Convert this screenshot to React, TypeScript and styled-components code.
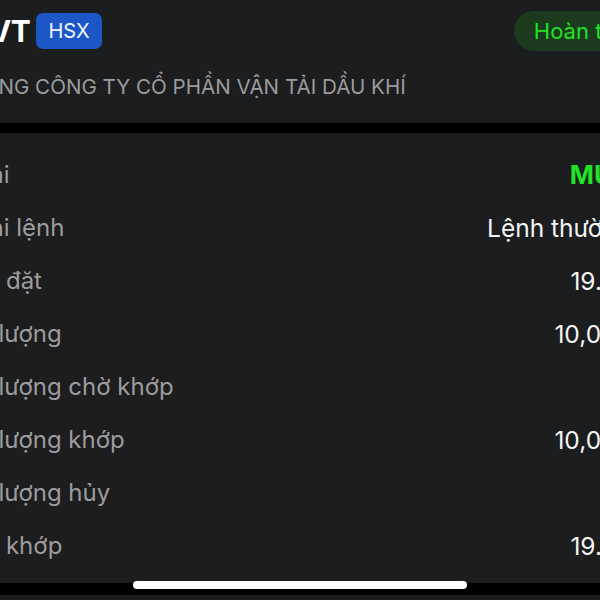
import styled, { createGlobalStyle } from "styled-components";

const GlobalStyle = createGlobalStyle`
  html, body {
    margin: 0;
    padding: 0;
    background: #000;
  }
  * {
    box-sizing: border-box;
  }
`;

const Screen = styled.div`
  position: relative;
  width: 600px;
  height: 600px;
  overflow: hidden;
  background: #000;
  font-family: "Inter", "Noto Sans", sans-serif;
`;

// the screenshot is a crop of a wider phone screen, so the content runs past both edges
const Viewport = styled.div`
  width: 670px;
  margin-left: -38px;
  display: flex;
  flex-direction: column;
  gap: 10px;
`;

const Header = styled.header`
  background: #1c1d1f;
  height: 123px;
  padding: 11px 0 0 8px;
  display: flex;
  flex-direction: column;
  gap: 23px;
`;

const TitleRow = styled.div`
  display: flex;
  align-items: center;
  height: 40px;
`;

const Ticker = styled.span`
  font-size: 30px;
  font-weight: 700;
  color: #ffffff;
  letter-spacing: -0.5px;
`;

const ExchangeBadge = styled.span`
  margin-left: 6px;
  height: 36px;
  padding: 0 12px;
  display: flex;
  align-items: center;
  background: #1d56c6;
  border-radius: 7px;
  color: #f2f5ff;
  font-size: 20px;
`;

const StatusPill = styled.span`
  margin-left: auto;
  margin-right: -10px;
  height: 40px;
  padding: 0 20px;
  display: flex;
  align-items: center;
  background: #1b3a1e;
  border-radius: 20px;
  color: #22e326;
  font-size: 22px;
`;

const CompanyName = styled.div`
  font-size: 20.6px;
  color: #9b9b9d;
  white-space: nowrap;
`;

const Card = styled.section`
  background: #1c1d1f;
  height: 450px;
  padding-top: 15px;
  display: flex;
  flex-direction: column;
`;

const Row = styled.div`
  height: 53px;
  display: flex;
  align-items: center;
  justify-content: space-between;
  font-size: 24px;
  white-space: nowrap;
`;

const Label = styled.span`
  color: #9c9c9e;
`;

const Value = styled.span<{ $accent?: boolean }>`
  color: ${(p) => (p.$accent ? "#22e326" : "#f4f4f4")};
  font-weight: ${(p) => (p.$accent ? 700 : 400)};
  font-size: ${(p) => (p.$accent ? "26px" : "24.5px")};
`;

const HomeIndicator = styled.div`
  position: absolute;
  left: 133px;
  top: 581px;
  width: 334px;
  height: 8px;
  border-radius: 4px;
  background: #ffffff;
`;

const BottomEdge = styled.div`
  position: absolute;
  left: 0;
  right: 0;
  bottom: 0;
  height: 5px;
  background: #1c1d1f;
`;

const rows = [
  { label: "Loại", value: "MUA", accent: true },
  { label: "Loại lệnh", value: "Lệnh thường" },
  { label: "Giá đặt", value: "19.50" },
  { label: "Số lượng", value: "10,000" },
  { label: "Số lượng chờ khớp", value: "0" },
  { label: "Số lượng khớp", value: "10,000" },
  { label: "Số lượng hủy", value: "0" },
  { label: "Giá khớp", value: "19.50" },
];

export default function App() {
  return (
    <>
      <GlobalStyle />
      <Screen>
        <Viewport>
          <Header>
            <TitleRow>
              <Ticker>PVT</Ticker>
              <ExchangeBadge>HSX</ExchangeBadge>
              <StatusPill>Hoàn tất</StatusPill>
            </TitleRow>
            <CompanyName>TỔNG CÔNG TY CỔ PHẦN VẬN TẢI DẦU KHÍ</CompanyName>
          </Header>
          <Card>
            {rows.map((r) => (
              <Row key={r.label}>
                <Label>{r.label}</Label>
                <Value $accent={r.accent}>{r.value}</Value>
              </Row>
            ))}
          </Card>
        </Viewport>
        <BottomEdge />
        <HomeIndicator />
      </Screen>
    </>
  );
}
